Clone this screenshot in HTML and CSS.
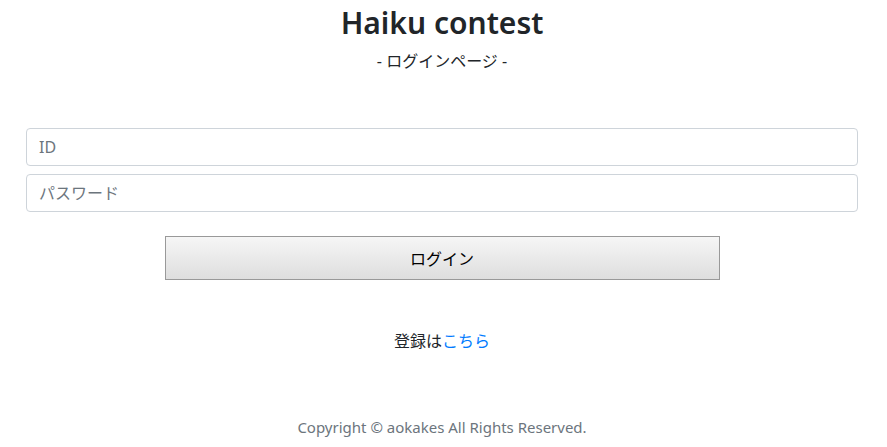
FILE: index.html
```html
<!DOCTYPE html>
<html lang="ja">
<head>
<meta charset="utf-8">
<title>Haiku contest - ログインページ</title>
<link rel="stylesheet" href="styles.css">
</head>
<body>
<div class="page">
  <header class="head">
    <h1 class="title">Haiku contest</h1>
    <p class="subtitle">- ログインページ -</p>
  </header>
  <form class="login">
    <input class="field" type="text" placeholder="ID">
    <input class="field" type="password" placeholder="パスワード">
    <div class="btn-row">
      <button type="button" class="btn">ログイン</button>
    </div>
  </form>
  <p class="register">登録は<a href="#" class="link">こちら</a></p>
  <footer class="foot">Copyright © aokakes All Rights Reserved.</footer>
</div>
</body>
</html>
```
FILE: styles.css
```css
* { box-sizing: border-box; }
html, body { margin: 0; padding: 0; background: #fff; }
body {
  font-family: "Noto Sans", "Noto Sans CJK JP", sans-serif;
  font-size: 16px;
  color: #212529;
}
.page {
  width: 887px;
  height: 447px;
  display: flex;
  flex-direction: column;
  padding: 0 29px 0 26px;
}
.head { text-align: center; }
.title {
  margin: 0;
  padding-top: 3px;
  font-size: 30px;
  font-weight: 600;
  line-height: 40px;
  color: #212529;
}
.subtitle {
  margin: 6px 0 0;
  font-size: 16px;
  line-height: 24px;
  color: #212529;
}
.login {
  margin-top: 55px;
  display: flex;
  flex-direction: column;
  gap: 8px;
}
.field {
  display: block;
  width: 100%;
  height: 38px;
  padding: 6px 12px;
  font-family: inherit;
  font-size: 16px;
  color: #495057;
  border: 1px solid #ced4da;
  border-radius: 4px;
  background: #fff;
}
.field::placeholder { color: #6c757d; }
.btn-row {
  display: flex;
  justify-content: center;
  margin-top: 16px;
}
.btn {
  width: 555px;
  height: 44px;
  font-family: inherit;
  font-size: 16px;
  color: #000;
  border: 1px solid #999;
  border-radius: 0;
  background: linear-gradient(#f6f6f6, #dedede);
}
.register {
  margin: 49px 0 0;
  text-align: center;
  line-height: 24px;
}
.link { color: #007bff; text-decoration: none; }
.foot {
  margin-top: auto;
  padding-bottom: 8px;
  text-align: center;
  color: #6c757d;
  font-size: 15px;
  line-height: 24px;
}
```
